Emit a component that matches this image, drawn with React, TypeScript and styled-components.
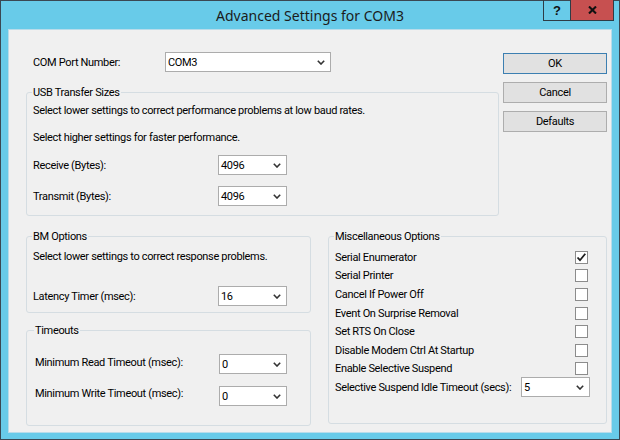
import React from "react";
import styled, { createGlobalStyle } from "styled-components";

const GlobalStyle = createGlobalStyle`
  html, body { margin: 0; padding: 0; }
  body { width: 620px; height: 440px; overflow: hidden; background: #68cbe9; }
  * { box-sizing: border-box; }
`;

const Frame = styled.div`
  width: 620px;
  height: 440px;
  border: 1px solid #3a4853;
  background: #68cbe9;
  padding: 0 7px 6px;
  display: flex;
  flex-direction: column;
  font-family: Roboto, "Liberation Sans", sans-serif;
  font-size: 11px;
  letter-spacing: -0.33px;
  line-height: 13px;
  color: #000;
`;

const TitleBar = styled.div`
  height: 28px;
  flex: none;
  display: grid;
  grid-template-columns: 1fr auto 1fr;
  align-items: center;
`;

const Title = styled.div`
  grid-column: 2;
  font-family: "Noto Sans", "Open Sans", sans-serif;
  font-size: 14px;
  letter-spacing: 0;
  line-height: 18px;
  color: #1b1b1b;
  padding-top: 1px;
`;

const CaptionButtons = styled.div`
  grid-column: 3;
  justify-self: end;
  align-self: start;
  display: flex;
  margin: -1px -2px 0 0;
`;

const CaptionButton = styled.div<{ $close?: boolean }>`
  height: 21px;
  width: ${(p) => (p.$close ? 43 : 28)}px;
  background: ${(p) => (p.$close ? "#c75050" : "transparent")};
  border: 1px solid #2e3c46;
  border-top: none;
  ${(p) => (p.$close ? "border-left: none;" : "")}
  display: flex;
  align-items: center;
  justify-content: center;
  font-family: "Liberation Sans", sans-serif;
  font-weight: bold;
  font-size: 13px;
  letter-spacing: 0;
  color: #111;
`;

const Client = styled.div`
  flex: 1;
  background: #f0f0f0;
  border: 1px solid #b9dcea;
  padding: 22px 4px 0 17px;
  display: flex;
  flex-direction: column;
`;

const TopGrid = styled.div`
  display: grid;
  grid-template-columns: 473px 104px;
  column-gap: 4px;
  align-items: start;
`;

const BottomGrid = styled.div`
  display: grid;
  grid-template-columns: 285px 279px;
  column-gap: 17px;
  align-items: start;
  margin-top: 14px;
`;

const Column = styled.div<{ $gap?: number; $mt?: number }>`
  display: flex;
  flex-direction: column;
  gap: ${(p) => p.$gap ?? 0}px;
  margin-top: ${(p) => p.$mt ?? 0}px;
`;

const PortRow = styled.div`
  display: flex;
  align-items: center;
  height: 20px;
  padding-left: 7px;
`;

const Label = styled.span<{ $w?: number; $dy?: number }>`
  flex: none;
  width: ${(p) => (p.$w ? `${p.$w}px` : "auto")};
  margin-top: ${(p) => p.$dy ?? 0}px;
  white-space: nowrap;
`;

const Group = styled.fieldset<{ $pt: number; $pb: number; $px?: number; $mt?: number }>`
  margin: ${(p) => p.$mt ?? 0}px 0 0;
  padding: ${(p) => p.$pt}px ${(p) => p.$px ?? 6}px ${(p) => p.$pb}px;
  border: 1px solid #d5dde2;
  border-radius: 3px;
  min-width: 0;
`;

const Legend = styled.legend`
  padding: 0 1px;
  margin-left: -1px;
  line-height: 13px;
`;

const Note = styled.div<{ $mt: number }>`
  margin-top: ${(p) => p.$mt}px;
  white-space: nowrap;
`;

const FieldRow = styled.div<{ $mt?: number }>`
  display: flex;
  align-items: center;
  height: 20px;
  margin-top: ${(p) => p.$mt ?? 0}px;
`;

const SelectBox = styled.div<{ $w: number }>`
  flex: none;
  width: ${(p) => p.$w}px;
  height: 20px;
  background: #fff;
  border: 1px solid #acacac;
  display: flex;
  align-items: center;
  justify-content: space-between;
  padding: 0 5px 0 2px;
`;

const Button = styled.button<{ $default?: boolean }>`
  height: 21px;
  padding: 0;
  font: inherit;
  letter-spacing: inherit;
  color: #000;
  display: flex;
  align-items: center;
  justify-content: center;
  background: #e1e1e1;
  border: 1px solid ${(p) => (p.$default ? "#3c7fb1" : "#adadad")};
`;

const MiscRow = styled.div<{ $pr: number }>`
  height: 18.6px;
  display: flex;
  align-items: center;
  justify-content: space-between;
  padding-right: ${(p) => p.$pr}px;
`;

const CheckBox = styled.span`
  flex: none;
  width: 13px;
  height: 13px;
  background: #fff;
  border: 1px solid #8c8c8c;
  display: flex;
  align-items: center;
  justify-content: center;
`;

const Chevron = () => (
  <svg width="8" height="5" viewBox="0 0 8 5">
    <path d="M0.8 0.8 L4 4 L7.2 0.8" fill="none" stroke="#333" strokeWidth="1.6" />
  </svg>
);

const Select = ({ value, w }: { value: string; w: number }) => (
  <SelectBox $w={w}>
    <span>{value}</span>
    <Chevron />
  </SelectBox>
);

const Check = ({ checked }: { checked: boolean }) => (
  <CheckBox>
    {checked && (
      <svg width="11" height="11" viewBox="0 0 11 11">
        <path d="M1.5 5.5 L4 8.2 L9.3 1.8" fill="none" stroke="#1e1e1e" strokeWidth="1.8" />
      </svg>
    )}
  </CheckBox>
);

const CloseGlyph = () => (
  <svg width="9" height="8" viewBox="0 0 9 8">
    <path d="M1 0.5 L8 7.5 M8 0.5 L1 7.5" stroke="#111" strokeWidth="2.1" />
  </svg>
);

const misc: [string, boolean][] = [
  ["Serial Enumerator", true],
  ["Serial Printer", false],
  ["Cancel If Power Off", false],
  ["Event On Surprise Removal", false],
  ["Set RTS On Close", false],
  ["Disable Modem Ctrl At Startup", false],
  ["Enable Selective Suspend", false],
];

export default function App() {
  return (
    <>
      <GlobalStyle />
      <Frame>
        <TitleBar>
          <Title>Advanced Settings for COM3</Title>
          <CaptionButtons>
            <CaptionButton>?</CaptionButton>
            <CaptionButton $close>
              <CloseGlyph />
            </CaptionButton>
          </CaptionButtons>
        </TitleBar>
        <Client>
          <TopGrid>
            <Column>
              <PortRow>
                <Label $w={132}>COM Port Number:</Label>
                <Select value="COM3" w={166} />
              </PortRow>
              <Group $mt={14} $pt={0} $pb={9}>
                <Legend>USB Transfer Sizes</Legend>
                <Note $mt={5}>Select lower settings to correct performance problems at low baud rates.</Note>
                <Note $mt={14}>Select higher settings for faster performance.</Note>
                <FieldRow $mt={11}>
                  <Label $w={185}>Receive (Bytes):</Label>
                  <Select value="4096" w={69} />
                </FieldRow>
                <FieldRow $mt={11}>
                  <Label $w={185}>Transmit (Bytes):</Label>
                  <Select value="4096" w={69} />
                </FieldRow>
              </Group>
            </Column>
            <Column $gap={8} $mt={1}>
              <Button $default>OK</Button>
              <Button>Cancel</Button>
              <Button>Defaults</Button>
            </Column>
          </TopGrid>
          <BottomGrid>
            <Column>
              <Group $pt={7} $pb={6}>
                <Legend>BM Options</Legend>
                <Note $mt={0}>Select lower settings to correct response problems.</Note>
                <FieldRow $mt={23}>
                  <Label $w={185}>Latency Timer (msec):</Label>
                  <Select value="16" w={69} />
                </FieldRow>
              </Group>
              <Group $mt={11} $pt={17} $pb={19} $px={8}>
                <Legend>Timeouts</Legend>
                <FieldRow>
                  <Label $w={184} $dy={-3}>Minimum Read Timeout (msec):</Label>
                  <Select value="0" w={68} />
                </FieldRow>
                <FieldRow $mt={12}>
                  <Label $w={184} $dy={-6}>Minimum Write Timeout (msec):</Label>
                  <Select value="0" w={68} />
                </FieldRow>
              </Group>
            </Column>
            <Group $pt={5} $pb={26}>
              <Legend>Miscellaneous Options</Legend>
              {misc.map(([label, checked]) => (
                <MiscRow key={label} $pr={12}>
                  <Label>{label}</Label>
                  <Check checked={checked} />
                </MiscRow>
              ))}
              <MiscRow $pr={10}>
                <Label>Selective Suspend Idle Timeout (secs):</Label>
                <Select value="5" w={69} />
              </MiscRow>
            </Group>
          </BottomGrid>
        </Client>
      </Frame>
    </>
  );
}
